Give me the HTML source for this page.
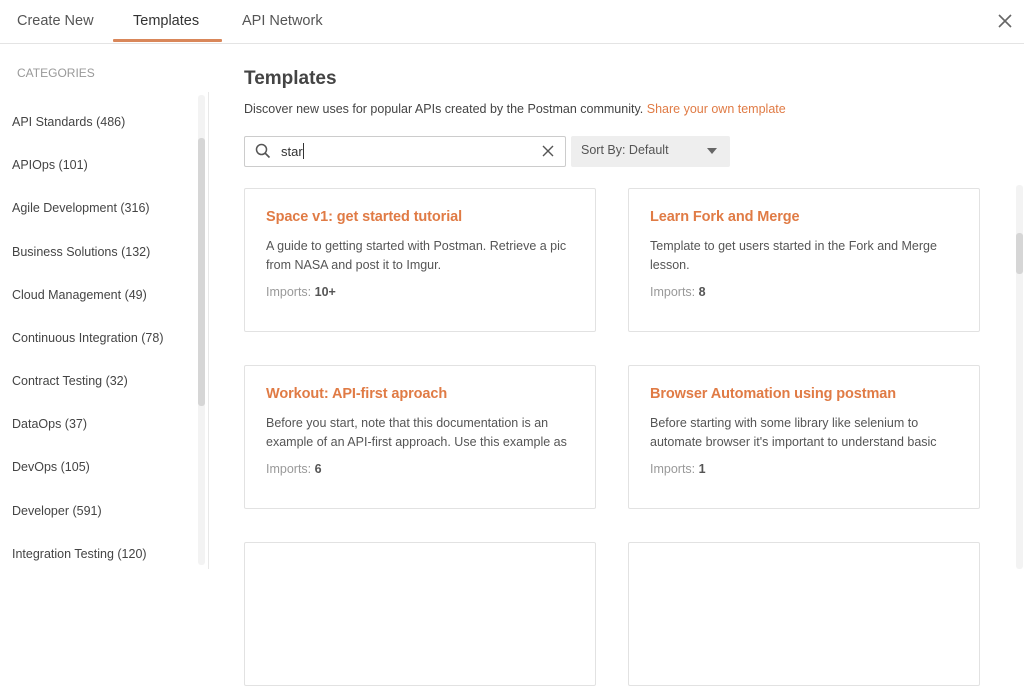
<!DOCTYPE html>
<html><head><style>
*{margin:0;padding:0;box-sizing:border-box}
body{width:1024px;height:569px;overflow:hidden;background:#fff;font-family:"Liberation Sans",sans-serif;color:#333;position:relative}
.a{position:absolute}
.tab{position:absolute;top:13px;font-size:14.5px;color:#555}
.cat{position:absolute;left:12px;font-size:12.5px;color:#444}
.card{position:absolute;width:352px;height:144px;border:1px solid #e2e2e2;border-radius:2px;background:#fff}
.card h3{position:absolute;left:21px;top:20px;font-size:14.5px;color:#e07b45;font-weight:bold;letter-spacing:-0.1px}
.card p{position:absolute;left:21px;top:48px;width:315px;font-size:12.5px;line-height:19px;color:#555;height:38px;overflow:hidden}
.card .im{position:absolute;left:21px;top:96px;font-size:12.5px;color:#999}
.card .im b{color:#555}
</style></head><body>
<div class="tab" style="left:17px">Create New</div>
<div class="tab" style="left:133px;color:#333">Templates</div>
<div class="tab" style="left:242px">API Network</div>
<div class="a" style="left:113px;top:39px;width:109px;height:3px;background:#d9875a;border-radius:1px"></div>
<div class="a" style="left:0;top:43px;width:1024px;height:1px;background:#e4e4e4"></div>
<svg class="a" style="left:998px;top:14px" width="14" height="14"><path d="M1 1L13 13M13 1L1 13" stroke="#666" stroke-width="1.6"/></svg>

<div class="a" style="left:17px;top:66px;font-size:12px;color:#999">CATEGORIES</div>
<div class="cat" style="top:115px">API Standards (486)</div>
<div class="cat" style="top:158px">APIOps (101)</div>
<div class="cat" style="top:201px">Agile Development (316)</div>
<div class="cat" style="top:245px">Business Solutions (132)</div>
<div class="cat" style="top:288px">Cloud Management (49)</div>
<div class="cat" style="top:331px">Continuous Integration (78)</div>
<div class="cat" style="top:374px">Contract Testing (32)</div>
<div class="cat" style="top:417px">DataOps (37)</div>
<div class="cat" style="top:460px">DevOps (105)</div>
<div class="cat" style="top:504px">Developer (591)</div>
<div class="cat" style="top:547px">Integration Testing (120)</div>
<div class="a" style="left:198px;top:95px;width:7px;height:470px;background:#f3f3f3;border-radius:3px"></div>
<div class="a" style="left:198px;top:138px;width:7px;height:268px;background:#d6d6d6;border-radius:3px"></div>
<div class="a" style="left:208px;top:92px;width:1px;height:477px;background:#e8e8e8"></div>

<div class="a" style="left:244px;top:68px;font-size:19px;font-weight:bold;color:#444">Templates</div>
<div class="a" style="left:244px;top:102px;font-size:12.5px;color:#444">Discover new uses for popular APIs created by the Postman community. <span style="color:#e07b45">Share your own template</span></div>
<div class="a" style="left:244px;top:136px;width:322px;height:31px;border:1px solid #ccc;border-radius:2px"></div>
<svg class="a" style="left:255px;top:143px" width="16" height="16"><circle cx="6.5" cy="6.5" r="5" fill="none" stroke="#555" stroke-width="1.5"/><path d="M10 10L14.5 14.5" stroke="#555" stroke-width="1.6"/></svg>
<div class="a" style="left:281px;top:143px;font-size:13px;color:#333">star<span style="display:inline-block;width:1px;height:16px;background:#333;vertical-align:-3px"></span></div>
<svg class="a" style="left:542px;top:145px" width="12" height="12"><path d="M1 1L11 11M11 1L1 11" stroke="#555" stroke-width="1.4"/></svg>
<div class="a" style="left:571px;top:136px;width:159px;height:31px;background:#eee;border-radius:2px"></div>
<div class="a" style="left:581px;top:143px;font-size:12.5px;color:#555">Sort By: Default</div>
<svg class="a" style="left:707px;top:148px" width="10" height="6"><path d="M0 0H10L5 6Z" fill="#666"/></svg>

<div class="card" style="left:244px;top:188px"><h3>Space v1: get started tutorial</h3><p>A guide to getting started with Postman. Retrieve a pic from NASA and post it to Imgur.</p><div class="im">Imports: <b>10+</b></div></div>
<div class="card" style="left:628px;top:188px"><h3>Learn Fork and Merge</h3><p>Template to get users started in the Fork and Merge lesson.</p><div class="im">Imports: <b>8</b></div></div>
<div class="card" style="left:244px;top:365px"><h3>Workout: API-first aproach</h3><p>Before you start, note that this documentation is an example of an API-first approach. Use this example as</p><div class="im">Imports: <b>6</b></div></div>
<div class="card" style="left:628px;top:365px"><h3>Browser Automation using postman</h3><p>Before starting with some library like selenium to automate browser it's important to understand basic</p><div class="im">Imports: <b>1</b></div></div>
<div class="card" style="left:244px;top:542px"></div>
<div class="card" style="left:628px;top:542px"></div>
<div class="a" style="left:1016px;top:185px;width:7px;height:384px;background:#f3f3f3;border-radius:3px"></div>
<div class="a" style="left:1016px;top:233px;width:7px;height:41px;background:#d6d6d6;border-radius:3px"></div>
</body></html>
